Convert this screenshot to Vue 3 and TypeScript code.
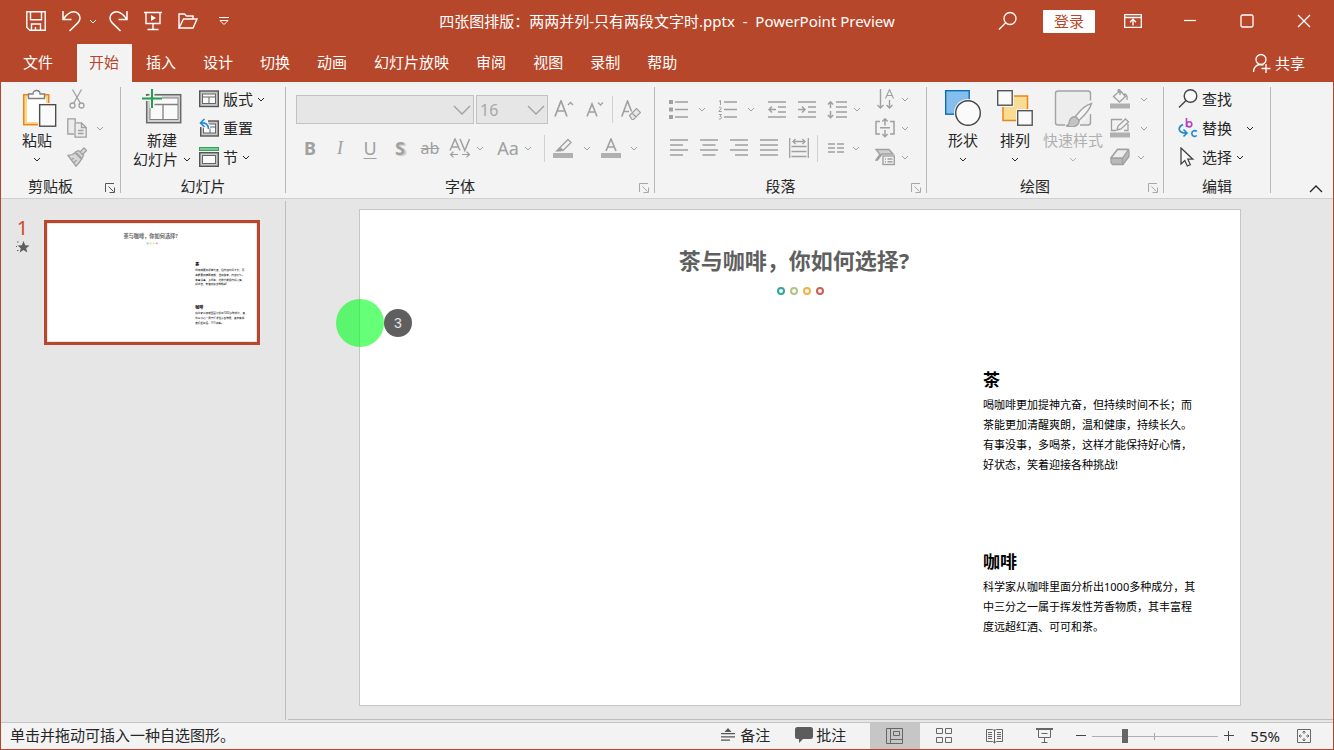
<script setup lang="ts">
import { h, ref } from 'vue'

interface TextBlock {
  title: string
  lines: string[]
}

const Chevron = () =>
  h('svg', { class: 'chev', viewBox: '0 0 8 5', width: 8, height: 5, 'aria-hidden': 'true' }, [
    h('path', { d: 'M1 1l3 3 3-3', fill: 'none', stroke: 'currentColor', 'stroke-width': 1 }),
  ])

const Launcher = () =>
  h('svg', { viewBox: '0 0 10 10', width: 10, height: 10, 'aria-hidden': 'true' }, [
    h('path', {
      d: 'M.5 9V.5H9M3.5 3.5l5 5M9.500 4.500v5h-5',
      fill: 'none',
      stroke: 'currentColor',
      'stroke-width': 1,
    }),
  ])

const tabs: string[] = ['文件', '开始', '插入', '设计', '切换', '动画', '幻灯片放映', '审阅', '视图', '录制', '帮助']
const activeTab = ref('开始')
const zoomLevel = ref(25)

const slideTitle = '茶与咖啡，你如何选择?'
const blocks: TextBlock[] = [
  {
    title: '茶',
    lines: [
      '喝咖啡更加提神亢奋，但持续时间不长；而',
      '茶能更加清醒爽朗，温和健康，持续长久。',
      '有事没事，多喝茶，这样才能保持好心情，',
      '好状态，笑着迎接各种挑战!',
    ],
  },
  {
    title: '咖啡',
    lines: ['科学家从咖啡里面分析出1000多种成分，其', '中三分之一属于挥发性芳香物质，其丰富程', '度远超红酒、可可和茶。'],
  },
]
const blockTops: number[] = [176, 358]
const ringNames: string[] = ['teal', 'green', 'amber', 'red']
</script>

<template>
  <div class="window" lang="zh-CN">
    <header class="titlebar">
      <div class="quick">
        <button class="q-save" aria-label="保存">
          <svg viewBox="0 0 20 20" width="20" height="20" fill="none" stroke="currentColor" stroke-width="1.4">
            <path d="M.8.8h18.400v18.400H3.800l-3-3zM4.500.8v8h11v-8M5.500 19v-6h9v6M9.500 16v3" />
          </svg>
        </button>
        <button class="q-undo" aria-label="撤消">
          <svg viewBox="0 0 20 22" width="20" height="22" fill="none" stroke="currentColor" stroke-width="1.500">
            <path d="M1 1v8.500h8.500M1.300 9C5 4 7.500 1.800 11.500 1.800c3.700 0 6.500 2.700 6.500 6.200 0 2-.8 3.500-2.200 4.900L7.500 21" />
          </svg>
        </button>
        <button class="q-more" aria-label="撤消选项"><Chevron /></button>
        <button class="q-redo" aria-label="重复">
          <svg viewBox="0 0 20 22" width="20" height="22" fill="none" stroke="currentColor" stroke-width="1.500">
            <path d="M19 1v8.500h-8.500M18.700 9C15 4 12.500 1.800 8.500 1.800 4.800 1.800 2 4.500 2 8c0 2 .8 3.500 2.200 4.900L12.500 21" />
          </svg>
        </button>
        <button class="q-show" aria-label="从头开始">
          <svg viewBox="0 0 20 20" width="20" height="20" fill="none" stroke="currentColor" stroke-width="1.400">
            <path d="M1 1.500h18M3 1.500v11h14v-11M10 12.500v6M4.500 18.500h11" />
            <path d="M8 4l5 3-5 3z" fill="currentColor" stroke="none" />
          </svg>
        </button>
        <button class="q-open" aria-label="打开">
          <svg viewBox="0 0 20 18" width="20" height="18" fill="none" stroke="currentColor" stroke-width="1.400">
            <path d="M1 16V2h5.500l2 2H15v3M1 16L5.500 7H19l-4 9z" />
          </svg>
        </button>
        <button class="q-custom" aria-label="自定义快速访问工具栏">
          <svg viewBox="0 0 12 10" width="12" height="10" fill="none" stroke="currentColor" stroke-width="1">
            <path d="M1 1.500h10M2 4.500h8L6 8.500z" />
          </svg>
        </button>
      </div>
      <h1 class="doc-title">四张图排版：两两并列-只有两段文字时.pptx&nbsp; -&nbsp; PowerPoint Preview</h1>
      <div class="win-tools">
        <button class="search" aria-label="搜索">
          <svg viewBox="0 0 20 20" width="20" height="20" fill="none" stroke="currentColor" stroke-width="1.300">
            <circle cx="12" cy="7.500" r="6" />
            <path d="M7.700 11.800L1 18.500" />
          </svg>
        </button>
        <button class="login">登录</button>
        <button class="win-btn" aria-label="功能区显示选项">
          <svg viewBox="0 0 18 14" width="18" height="14" fill="none" stroke="currentColor" stroke-width="1.300">
            <path d="M.7.7h16.600v12.600H.7zM.7 3.500h16.600M9 11.500V5.500M6 8.200l3-3 3 3" />
          </svg>
        </button>
        <button class="win-btn" aria-label="最小化">
          <svg viewBox="0 0 14 14" width="14" height="14" stroke="currentColor" stroke-width="1.200"><path d="M1 6.500h12" /></svg>
        </button>
        <button class="win-btn" aria-label="最大化">
          <svg viewBox="0 0 14 14" width="14" height="14" fill="none" stroke="currentColor" stroke-width="1.300">
            <rect x="1" y="1" width="12" height="12" rx="1.500" />
          </svg>
        </button>
        <button class="win-btn" aria-label="关闭">
          <svg viewBox="0 0 14 14" width="14" height="14" stroke="currentColor" stroke-width="1.300"><path d="M1 1l12 12M13 1L1 13" /></svg>
        </button>
      </div>
    </header>

    <nav class="tabs">
      <button
        v-for="tab in tabs"
        :key="tab"
        class="tab"
        :class="{ active: tab === activeTab, file: tab === '文件' }"
        @click="activeTab = tab"
      >
        {{ tab }}
      </button>
      <button class="share">
        <svg viewBox="0 0 20 20" width="20" height="20" fill="none" stroke="currentColor" stroke-width="1.300">
          <circle cx="9" cy="6.500" r="5" />
          <path d="M1.500 19c0-4.500 3-7.500 7-7.500 1.300 0 2.300.2 3 .6M14 11v9M9.500 15.500h9" />
        </svg>
        共享
      </button>
    </nav>

    <section class="ribbon" aria-label="功能区">
      <div class="group clipboard">
        <div class="content">
          <button class="big">
            <svg viewBox="-2 0 40 38" width="40" height="38">
              <rect x="4.700" y="5.700" width="25" height="30" fill="#fbd98b" stroke="#e8861e" stroke-width="1.500" />
              <rect x="8" y="9" width="19" height="24" fill="#fff" />
              <path d="M9.500 9.500V5h4.500c0-2 1.500-3.500 3.500-3.500S21 3 21 5h4.500v4.500z" fill="#fafafa" stroke="#808080" stroke-width="1.300" />
              <rect x="19" y="14" width="18" height="24" fill="#f3f3f3" />
              <rect x="20.700" y="15.700" width="16" height="21.500" fill="#fafafa" stroke="#444" stroke-width="1.300" />
            </svg>
            <span>粘贴</span>
            <span class="drop"><Chevron /></span>
          </button>
          <div class="rows disabled">
            <button class="tool" aria-label="剪切">
              <svg viewBox="0 0 20 20" width="20" height="20" fill="none" stroke="currentColor" stroke-width="1.300">
                <path d="M5.500.5l8 14M14.500.5l-8 14" />
                <circle cx="5.500" cy="16.500" r="2.500" />
                <circle cx="14.500" cy="16.500" r="2.500" />
              </svg>
            </button>
            <div class="line">
              <button class="tool" aria-label="复制">
                <svg viewBox="0 0 20 20" width="20" height="20" fill="#ececec" stroke="currentColor" stroke-width="1.300">
                  <path d="M7 16H.8V.8h7.400V4" />
                  <path d="M8 4.800h6.500l4.700 4.700v9.700H8zM14.500 4.800v4.700h4.700M11 12.500h5.500M11 15.500h5.500" />
                </svg>
              </button>
              <button class="c-copy" aria-label="复制选项"><Chevron /></button>
            </div>
            <button class="tool" aria-label="格式刷">
              <svg viewBox="0 0 20 20" width="20" height="20" fill="#d8d8d8" stroke="currentColor" stroke-width="1.300">
                <path d="M1 8.500c3.500 0 5-.8 7-2.800l6.500 6.500c-1.500 2.500-3 4.500-5.500 7z" />
                <path d="M4 13l3-2M6.500 16l3-3M8.500 5l3-1.500 5 5-1.500 3zM13 5l4-4 2.500 2.500-4 4z" />
              </svg>
            </button>
          </div>
        </div>
        <footer><span>剪贴板</span><button class="launch" aria-label="剪贴板设置"><Launcher /></button></footer>
      </div>

      <div class="group slides">
        <div class="content">
          <button class="big">
            <svg viewBox="0 0 40 38" width="40" height="38">
              <rect x="4.700" y="5.700" width="34" height="28" fill="#d2d2d2" stroke="#6a6a6a" stroke-width="1.500" />
              <rect x="8" y="9" width="28" height="21.500" fill="#fafafa" stroke="#808080" />
              <path d="M8 15.500h28M21 15.500v15" stroke="#808080" fill="none" stroke-width="1.300" />
              <path d="M10 0v19M0 9.500h20" stroke="#f3f3f3" stroke-width="5" />
              <path d="M10 0v19M0 9.500h20" stroke="#22a04c" stroke-width="2" />
            </svg>
            <span>新建</span>
            <span class="drop">幻灯片<Chevron /></span>
          </button>
          <div class="rows">
            <button class="labelled">
              <svg viewBox="0 0 20 20" width="20" height="20">
                <rect x=".7" y="2" width="18.600" height="15.500" fill="#c8c8c8" stroke="#555" stroke-width="1.400" />
                <rect x="3.500" y="5" width="13" height="9.500" fill="#fafafa" stroke="#666" />
                <path d="M3.500 8h13M10 8v6.500" stroke="#666" />
              </svg>
              版式<Chevron />
            </button>
            <button class="labelled">
              <svg viewBox="0 0 20 20" width="20" height="20">
                <rect x="1.700" y="3" width="17.600" height="15" fill="#c8c8c8" stroke="#555" stroke-width="1.400" />
                <rect x="4.500" y="6" width="12" height="9" fill="#fafafa" stroke="#666" />
                <path d="M8 9h8.500M11 9v6" stroke="#666" />
                <path d="M0 0h9v9H0z" fill="#f3f3f3" />
                <path d="M5.500 1L1.500 5l4 4M2 5c4.500-.5 7.500 1.500 7.500 6" fill="none" stroke="#f3f3f3" stroke-width="4" />
                <path d="M5.500 1L1.500 5l4 4M2 5c4.500-.5 7.500 1.500 7.500 6" fill="none" stroke="#1e88d2" stroke-width="1.600" />
              </svg>
              重置
            </button>
            <button class="labelled">
              <svg viewBox="0 0 20 20" width="20" height="20">
                <rect x=".5" y=".5" width="19" height="3" fill="#7fc795" stroke="#31a354" />
                <rect x=".7" y="5.700" width="18.600" height="13.600" fill="#c8c8c8" stroke="#555" stroke-width="1.400" />
                <rect x="3.500" y="8.500" width="13" height="8" fill="#fafafa" stroke="#666" />
              </svg>
              节<Chevron />
            </button>
          </div>
        </div>
        <footer><span>幻灯片</span></footer>
      </div>

      <div class="group font">
        <div class="stack disabled">
          <div class="line first">
            <label class="combo wide">
              <select aria-label="字体" disabled><option></option></select>
              <svg viewBox="0 0 18 10" width="18" height="10" fill="none" stroke="currentColor" stroke-width="1.300"><path d="M1 1l8 8 8-8" /></svg>
            </label>
            <label class="combo">
              <select aria-label="字号" disabled><option>16</option></select>
              <svg viewBox="0 0 18 10" width="18" height="10" fill="none" stroke="currentColor" stroke-width="1.300"><path d="M1 1l8 8 8-8" /></svg>
            </label>
            <button class="cell" aria-label="增大字号">
              <svg viewBox="0 0 20 20" width="20" height="20" fill="none" stroke="currentColor" stroke-width="1.700">
                <path d="M1 16.500L7 .8l6 15.700M3.200 11h7.600" />
                <path d="M14 5l2.500-2.500L19 5" stroke-width="1.300" />
              </svg>
            </button>
            <button class="cell" aria-label="减小字号">
              <svg viewBox="0 0 20 20" width="20" height="20" fill="none" stroke="currentColor" stroke-width="1.600">
                <path d="M2 16.500L7 4l5 12.500M3.800 12h6.400" />
                <path d="M13 2.500L15.500 5 18 2.500" stroke-width="1.300" />
              </svg>
            </button>
            <i class="sep"></i>
            <button class="cell" aria-label="清除格式">
              <svg viewBox="0 0 20 20" width="20" height="20" fill="none" stroke="currentColor" stroke-width="1.600">
                <path d="M.8 16.500L6.500 1l4 10.500M3 11.500h5" />
                <path d="M8.500 15.500l7-7 4 4-7 7h-1.500zM11 13l4 4" stroke-width="1.200" fill="#e8e8e8" />
              </svg>
            </button>
          </div>
          <div class="line second">
            <button class="cell glyph bold">B</button>
            <button class="cell glyph italic">I</button>
            <button class="cell glyph under">U</button>
            <button class="cell glyph shadow">S</button>
            <button class="cell glyph strike">ab</button>
            <button class="cell" aria-label="字符间距">
              <svg viewBox="0 0 22 20" width="22" height="20" fill="none" stroke="currentColor" stroke-width="1.500">
                <path d="M1 12.500L6 1l5 11.500M3 9h6M11 1l4.800 11.500L20.500 1" />
                <path d="M9 16.500H1.500M4.500 13.800l-3 2.700 3 2.700M13 16.500h7.500M17.500 13.800l3 2.700-3 2.700" stroke-width="1.200" />
              </svg>
            </button>
            <button class="c-near" aria-label="字符间距选项"><Chevron /></button>
            <button class="cell glyph case">Aa</button>
            <button class="c-near" aria-label="大小写选项"><Chevron /></button>
            <i class="sep late"></i>
            <button class="cell" aria-label="突出显示颜色">
              <svg viewBox="0 0 20 20" width="20" height="20" fill="none" stroke="currentColor" stroke-width="1.300">
                <path d="M7 9.500L15 1.500l3 3L10 12.500zM7 9.500l3 3M6.500 10l-2.500 3" />
                <path d="M2 13.500l4.500-4 3 3-1.500 1z" fill="currentColor" stroke="none" />
                <path d="M0 17.500h20" stroke="#b0b0b0" stroke-width="5" />
              </svg>
            </button>
            <button class="c-mid" aria-label="突出显示选项"><Chevron /></button>
            <button class="cell" aria-label="字体颜色">
              <svg viewBox="0 0 20 20" width="20" height="20" fill="none" stroke="currentColor" stroke-width="1.600">
                <path d="M5 13l5-12 5 12M6.700 9h6.600" />
                <path d="M0 17.500h20" stroke="#b0b0b0" stroke-width="5" />
              </svg>
            </button>
            <button class="c-wide" aria-label="字体颜色选项"><Chevron /></button>
          </div>
        </div>
        <footer><span>字体</span><button class="launch pale" aria-label="字体设置"><Launcher /></button></footer>
      </div>

      <div class="group paragraph">
        <div class="content disabled">
          <div class="stack">
            <div class="line first">
              <button class="cell" aria-label="项目符号">
                <svg viewBox="0 0 20 20" width="20" height="20" stroke="currentColor" stroke-width="1.500">
                  <path d="M6 2h13M6 9.500h13M6 17h13" />
                  <path d="M0 2h4M0 9.500h4M0 17h4" stroke-width="4" />
                </svg>
              </button>
              <button class="c-wide" aria-label="项目符号选项"><Chevron /></button>
              <button class="cell push" aria-label="编号">
                <svg viewBox="0 0 20 20" width="20" height="20" fill="none" stroke="currentColor" stroke-width="1.500">
                  <path d="M6 2h13M6 9.500h13M6 17h13" />
                  <path d="M1 1.500L2.500.5V5M.8 8c.5-1.200 3-1 2.400.5L.8 11.500h3M.8 14.500h2.700L2 16.500c2.500 0 2 3-1.200 2.500" stroke-width="1" />
                </svg>
              </button>
              <button class="c-wide" aria-label="编号选项"><Chevron /></button>
              <button class="cell push" aria-label="减少缩进">
                <svg viewBox="0 0 20 20" width="20" height="20" fill="none" stroke="currentColor" stroke-width="1.500">
                  <path d="M1 2h18M11 7h8M11 12h8M1 17h18M9 9.500H2M5 6.500l-3 3 3 3" />
                </svg>
              </button>
              <button class="cell" aria-label="增加缩进">
                <svg viewBox="0 0 20 20" width="20" height="20" fill="none" stroke="currentColor" stroke-width="1.500">
                  <path d="M1 2h18M11 7h8M11 12h8M1 17h18M1 9.500h7M5 6.500l3 3-3 3" />
                </svg>
              </button>
              <button class="cell" aria-label="行距">
                <svg viewBox="0 0 20 20" width="20" height="20" fill="none" stroke="currentColor" stroke-width="1.500">
                  <path d="M9 2h11M9 7h11M9 12h11M9 17h11M3.500 2v6M.8 4.500l2.700-2.700 2.700 2.700M3.500 11v7M.8 15l2.700 2.700L6.200 15" />
                </svg>
              </button>
              <button class="c-near" aria-label="行距选项"><Chevron /></button>
            </div>
            <div class="line second">
              <button class="cell" aria-label="左对齐">
                <svg viewBox="0 0 20 20" width="20" height="20" stroke="currentColor" stroke-width="1.500"><path d="M1 2h18M1 7h13M1 12h18M1 17h13" /></svg>
              </button>
              <button class="cell" aria-label="居中">
                <svg viewBox="0 0 20 20" width="20" height="20" stroke="currentColor" stroke-width="1.500"><path d="M1 2h18M3.500 7h13M1 12h18M3.500 17h13" /></svg>
              </button>
              <button class="cell" aria-label="右对齐">
                <svg viewBox="0 0 20 20" width="20" height="20" stroke="currentColor" stroke-width="1.500"><path d="M1 2h18M6 7h13M1 12h18M6 17h13" /></svg>
              </button>
              <button class="cell" aria-label="两端对齐">
                <svg viewBox="0 0 20 20" width="20" height="20" stroke="currentColor" stroke-width="1.500"><path d="M1 2h18M1 7h18M1 12h18M1 17h18" /></svg>
              </button>
              <button class="cell" aria-label="分散对齐">
                <svg viewBox="0 0 20 20" width="20" height="20" fill="none" stroke="currentColor" stroke-width="1.300">
                  <path d="M.7 0v20M19.300 0v20M2.500 8.500h15M2.500 13.500h15M2.500 18.500h15M4 3.500h12M6.500 1L4 3.500 6.500 6M13.500 1L16 3.500 13.500 6" />
                </svg>
              </button>
              <i class="sep"></i>
              <button class="cell" aria-label="分栏">
                <svg viewBox="0 0 20 20" width="20" height="20" stroke="currentColor" stroke-width="1.300"><path d="M2 6h7M2 10h7M2 14h7M11 6h7M11 10h7M11 14h7" /></svg>
              </button>
              <button class="c-near" aria-label="分栏选项"><Chevron /></button>
            </div>
          </div>
          <div class="rows">
            <div class="line">
              <button class="cell" aria-label="文字方向">
                <svg viewBox="0 0 20 20" width="20" height="20" fill="none" stroke="currentColor" stroke-width="1.400">
                  <path d="M5.500 0v18.500M2.500 16l3 3 3-3M14.500 11v7.500M11.500 16l3 3 3-3" />
                  <path d="M10.500 9.500L14.500.5l4 9M12 6.500h5" stroke-width="1.100" />
                </svg>
              </button>
              <button class="c-near" aria-label="文字方向选项"><Chevron /></button>
            </div>
            <div class="line">
              <button class="cell" aria-label="对齐文本">
                <svg viewBox="0 0 20 20" width="20" height="20" fill="none" stroke="currentColor" stroke-width="1.500">
                  <path d="M5 3.500H1v12.500h4M15 3.500h4v12.500h-4M5 9.800h10M10 7.500V1M7.300 3.500L10 .8l2.700 2.700M10 12v6.500M7.300 16l2.700 2.700 2.700-2.700" />
                </svg>
              </button>
              <button class="c-near" aria-label="对齐文本选项"><Chevron /></button>
            </div>
            <div class="line">
              <button class="cell" aria-label="转换为 SmartArt">
                <svg viewBox="0 0 20 20" width="20" height="20" fill="#cfcfcf" stroke="currentColor" stroke-width="1.400">
                  <path d="M1 2.500h13L18 7H7l-4.500 6H1l4-5.500z" />
                  <rect x="8" y="9" width="11.300" height="8.500" fill="#f3f3f3" />
                  <path d="M10 12h1M12.500 12h5M10 14.700h1M12.500 14.700h5" />
                </svg>
              </button>
              <button class="c-near" aria-label="SmartArt 选项"><Chevron /></button>
            </div>
          </div>
        </div>
        <footer><span>段落</span><button class="launch pale" aria-label="段落设置"><Launcher /></button></footer>
      </div>

      <div class="group drawing">
        <div class="content">
          <button class="big">
            <svg viewBox="0 0 38 38" width="38" height="38">
              <rect x="1.700" y="1.700" width="23.500" height="23.500" fill="#83beec" stroke="#0f6cbd" stroke-width="1.400" />
              <circle cx="24" cy="24" r="14" fill="#f3f3f3" />
              <circle cx="24" cy="24" r="12.300" fill="#fafafa" stroke="#444" stroke-width="1.400" />
            </svg>
            <span>形状</span>
            <span class="drop"><Chevron /></span>
          </button>
          <button class="big">
            <svg viewBox="0 0 38 38" width="38" height="38">
              <rect x="7" y="7" width="24.500" height="24.500" fill="#f8dc91" stroke="#e8861e" stroke-width="1.500" />
              <path d="M0 0h18v18H0zM20 20h18v18H20z" fill="#f3f3f3" />
              <rect x="1.700" y="1.700" width="14.500" height="14.500" fill="#fafafa" stroke="#555" stroke-width="1.400" />
              <rect x="21.700" y="21.700" width="14.500" height="14.500" fill="#fafafa" stroke="#555" stroke-width="1.400" />
            </svg>
            <span>排列</span>
            <span class="drop"><Chevron /></span>
          </button>
          <button class="big faded">
            <svg viewBox="0 0 40 38" width="40" height="38" fill="none" stroke="#a3a3a3" stroke-width="1.400">
              <path d="M12 36H5a2.500 2.500 0 0 1-2.500-2.500v-29A2.500 2.500 0 0 1 5 2h30a2.500 2.500 0 0 1 2.500 2.500v7M37.500 25v8.500A2.500 2.500 0 0 1 35 36h-8" fill="#ededed" />
              <path d="M22.500 27.500C28 20 33 16 38.500 14.500 37 20 32 26 26 31.500z" fill="#f5f5f5" />
              <path d="M13 36.500c3 0 3-2 3.500-4.500.8-3.500 4-5 6.500-4l3 3.500c.5 5-6 8.500-13 5z" fill="#c4c4c4" />
            </svg>
            <span>快速样式</span>
            <span class="drop"><Chevron /></span>
          </button>
          <div class="rows disabled">
            <div class="line">
              <button class="cell" aria-label="形状填充">
                <svg viewBox="0 0 20 20" width="20" height="20" fill="none" stroke="currentColor" stroke-width="1.300">
                  <path d="M3.500 7.500l6.500-6 5.500 6-6 5.500zM8 4V1.500c0-1.200 2-1.200 2 0V6M14 5c2.500 0 3.500 1.500 3 6" />
                  <path d="M0 17h20" stroke="#b0b0b0" stroke-width="5" />
                </svg>
              </button>
              <button class="c-wide" aria-label="形状填充选项"><Chevron /></button>
            </div>
            <div class="line">
              <button class="cell" aria-label="形状轮廓">
                <svg viewBox="0 0 20 20" width="20" height="20" fill="none" stroke="currentColor" stroke-width="1.300">
                  <path d="M12 1.500H1.500v11H6M18 6v6.500h-4M7 12l1-4 7.500-7 3 3L11 11z" />
                  <path d="M0 17h20" stroke="#b0b0b0" stroke-width="5" />
                </svg>
              </button>
              <button class="c-wide" aria-label="形状轮廓选项"><Chevron /></button>
            </div>
            <div class="line">
              <button class="cell" aria-label="形状效果">
                <svg viewBox="0 0 20 20" width="20" height="20" fill="#b8b8b8" stroke="currentColor" stroke-width="1.300">
                  <path d="M1 11L7.500 2.500H17.500L19 4v5.500L13 17.500H2.500L1 15.500z" />
                  <path d="M1 11L7.500 2.500h11L12.500 11z" fill="#ededed" />
                  <path d="M12.500 11v6.500" />
                </svg>
              </button>
              <button class="c-near" aria-label="形状效果选项"><Chevron /></button>
            </div>
          </div>
        </div>
        <footer><span>绘图</span><button class="launch pale" aria-label="绘图设置"><Launcher /></button></footer>
      </div>

      <div class="group editing">
        <div class="content">
          <div class="rows">
            <button class="labelled">
              <svg viewBox="0 0 20 20" width="20" height="20" fill="#fafafa" stroke="#444" stroke-width="1.400">
                <circle cx="12.500" cy="7" r="6.300" />
                <path d="M8 11.500L1 18.500" />
              </svg>
              查找
            </button>
            <button class="labelled far">
              <svg viewBox="0 0 20 20" width="20" height="20" fill="none" stroke-width="1.600">
                <path d="M8.500 0v9" stroke="#b146c2" />
                <circle cx="11.200" cy="6.300" r="2.600" stroke="#b146c2" />
                <path d="M18.800 13.500c-1.500-1.500-5-1-5 2s3.500 3.500 5 2M5 6.500C-.5 9-.5 15 8.500 15M5.500 11.500L9 15l-3.500 3.500" stroke="#1e88d2" />
              </svg>
              替换<Chevron />
            </button>
            <button class="labelled">
              <svg viewBox="0 0 20 20" width="20" height="20" fill="#fafafa" stroke="#444" stroke-width="1.300">
                <path d="M3 1v16l3.800-3.500 2.500 5.500 3-1.400-2.500-5.400h5z" />
              </svg>
              选择<Chevron />
            </button>
          </div>
        </div>
        <footer><span>编辑</span></footer>
      </div>

      <button class="collapse" aria-label="折叠功能区">
        <svg viewBox="0 0 14 8" width="14" height="8" fill="none" stroke="currentColor" stroke-width="1.300"><path d="M1 7l6-6 6 6" /></svg>
      </button>
    </section>

    <main class="workspace">
      <aside class="thumbs">
        <div class="index">
          <span>1</span>
          <svg viewBox="0 0 14 14" width="14" height="14" fill="#5f5f5f">
            <path d="M7.500 1l1.700 4.200 4.300.2-3.300 2.800 1.100 4.300-3.800-2.400-3.800 2.400 1.100-4.300L1.500 5.400l4.300-.2z" />
            <path d="M1 1.500h1.500v1H1zM0 6h1v1H0zM1 10h1.500v1H1z" />
          </svg>
        </div>
        <button class="thumb" aria-label="幻灯片 1">
          <svg viewBox="0 0 880 496" class="mini">
            <text x="319" y="59" class="mini-title">{{ slideTitle }}</text>
            <circle v-for="(name, i) in ringNames" :key="name" :cx="421 + i * 13" cy="82" r="3" fill="none" stroke-width="2" :class="name" />
            <g v-for="(block, b) in blocks" :key="block.title">
              <text x="623" :y="blockTops[b]" class="mini-head">{{ block.title }}</text>
              <text v-for="(line, i) in block.lines" :key="line" x="623" :y="blockTops[b] + 24 + i * 20" class="mini-body">{{ line }}</text>
            </g>
          </svg>
        </button>
      </aside>
      <section class="stage">
        <article class="slide">
          <h2>{{ slideTitle }}</h2>
          <div class="rings">
            <i v-for="name in ringNames" :key="name" :class="name"></i>
          </div>
          <section v-for="block in blocks" :key="block.title" class="block">
            <h3>{{ block.title }}</h3>
            <p>
              <span v-for="line in block.lines" :key="line">{{ line }}</span>
            </p>
          </section>
          <div class="marker">
            <span class="spot"></span>
            <span class="count">3</span>
          </div>
        </article>
      </section>
    </main>

    <footer class="status">
      <span class="hint">单击并拖动可插入一种自选图形。</span>
      <button class="note">
        <svg viewBox="0 0 14 14" width="14" height="14" fill="#555"><path d="M3.500 4L7 0l3.500 4zM0 5h14v1.200H0zM0 8.300h14v1.200H0zM0 11.500h9v1.200H0z" /></svg>
        备注
      </button>
      <button class="comment">
        <svg viewBox="0 0 18 16" width="18" height="16" fill="#5c5c5c">
          <path d="M2.500 0h13A2.500 2.500 0 0 1 18 2.500v7a2.500 2.500 0 0 1-2.500 2.500H8l-4 4v-4H2.500A2.500 2.500 0 0 1 0 9.500v-7A2.500 2.500 0 0 1 2.500 0z" />
        </svg>
        批注
      </button>
      <button class="view on" aria-label="普通视图">
        <svg viewBox="0 0 18 16" width="18" height="16" fill="none" stroke="currentColor"><path d="M.5.5h16v15H.5zM4.500.5v15M4.500 11.500H16.500M7.500 3.500h6v4h-6z" /></svg>
      </button>
      <button class="view" aria-label="幻灯片浏览">
        <svg viewBox="0 0 18 16" width="18" height="16" fill="none" stroke="currentColor"><path d="M.5.5h6v5h-6zM9.500.5h6v5h-6zM.5 9.500h6v5h-6zM9.500 9.500h6v5h-6z" /></svg>
      </button>
      <button class="view" aria-label="阅读视图">
        <svg viewBox="0 0 18 16" width="18" height="16" fill="none" stroke="currentColor">
          <path d="M.5 1.500h6l2 1 2-1h6v12h-6l-2 1-2-1h-6zM8.500 1.500v14M2 4.500h4M2 6.500h4M2 8.500h4M2 10.500h4M11 4.500h4M11 6.500h4M11 8.500h4M11 10.500h4" />
        </svg>
      </button>
      <button class="view" aria-label="幻灯片放映">
        <svg viewBox="0 0 18 16" width="18" height="16" fill="none" stroke="currentColor">
          <path d="M0 1h17" stroke-width="2" />
          <path d="M2.500 1.500v8h12v-8M5.500 5.500h6M8.500 9.500v5M5.500 14.500h6" />
        </svg>
      </button>
      <button class="step" aria-label="缩小">
        <svg viewBox="0 0 10 10" width="10" height="10" stroke="#444"><path d="M0 4.500h10" /></svg>
      </button>
      <input v-model.number="zoomLevel" class="zoom" type="range" min="0" max="100" aria-label="显示比例" />
      <button class="step" aria-label="放大">
        <svg viewBox="0 0 10 10" width="10" height="10" stroke="#444"><path d="M0 4.500h10M4.500 0v10" /></svg>
      </button>
      <button class="percent">55%</button>
      <button class="fit" aria-label="适应窗口">
        <svg viewBox="0 0 14 14" width="14" height="14" fill="none" stroke="#666">
          <path d="M.5.500h13v13H.5zM7 2v3M7 9v3M2 7h3M9 7h3M5.500 3.500L7 2l1.500 1.500M5.500 10.500L7 12l1.500-1.500M3.500 5.500L2 7l1.500 1.500M10.500 5.500L12 7l-1.500 1.500" />
        </svg>
      </button>
    </footer>
  </div>
</template>

<style>
body {
  margin: 0;
}
</style>

<style scoped>
.window {
  display: flex;
  flex-direction: column;
  box-sizing: border-box;
  height: 100vh;
  border: 1px solid #b7472a;
  border-top: 0;
  background: #f3f3f3;
  color: #262626;
  font: 15px/18px 'Noto Sans', 'Noto Sans CJK SC', sans-serif;
  overflow: hidden;
}
button {
  display: inline-flex;
  align-items: center;
  justify-content: center;
  flex: none;
  margin: 0;
  padding: 0;
  border: 0;
  background: none;
  color: inherit;
  font: inherit;
  white-space: nowrap;
}
svg {
  display: block;
  flex: none;
}

.titlebar {
  display: grid;
  grid-template-columns: 1fr auto 1fr;
  align-items: center;
  height: 42px;
  padding-bottom: 2px;
  flex: none;
  background: #b7472a;
  color: #fff;
}
.quick {
  display: flex;
  align-items: center;
  padding-left: 25px;
}
.q-undo {
  margin-left: 16px;
}
.q-more {
  margin-left: 7px;
}
.q-redo {
  margin-left: 11px;
}
.q-show {
  margin-left: 15px;
}
.q-open {
  margin-left: 15px;
}
.q-custom {
  margin-left: 20px;
}
.doc-title {
  margin: 0;
  font: inherit;
  white-space: nowrap;
}
.win-tools {
  display: flex;
  align-items: center;
  justify-content: flex-end;
  padding-right: 1px;
}
.search {
  width: 30px;
}
.login {
  width: 52px;
  height: 23px;
  margin: 0 9px 0 20px;
  border-radius: 1px;
  background: #fff;
  color: #b7472a;
}
.win-btn {
  width: 57px;
  height: 40px;
}

.tabs {
  display: flex;
  gap: 2px;
  flex: none;
  height: 38px;
  padding: 0 28px 0 10px;
  background: #b7472a;
  color: #fff;
}
.tab {
  padding: 0 13px 2px 12px;
}
.tab.file {
  margin-right: 9px;
}
.tab.active {
  background: #f3f3f3;
  color: #b7472a;
}
.share {
  gap: 3px;
  margin-left: auto;
}

.ribbon {
  display: flex;
  flex: none;
  height: 106px;
  padding: 5px 0;
  border-bottom: 1px solid #d0d0d0;
}
.group {
  display: flex;
  flex-direction: column;
  flex: none;
  border-right: 1px solid #b8b8b8;
}
.content,
.line {
  display: flex;
}
.line {
  align-items: center;
}
.group footer {
  display: flex;
  align-items: center;
  height: 14px;
  margin-top: auto;
}
.group footer span {
  flex: 1;
  text-align: center;
}
.launch {
  width: 20px;
  padding-top: 4px;
  color: #555;
}
.launch.pale {
  color: #a8a8a8;
}
.disabled {
  color: #a0a0a0;
}
.rows {
  display: grid;
  grid-template-rows: repeat(3, 24px);
  row-gap: 5px;
  justify-items: start;
}
.big {
  display: flex;
  flex-direction: column;
  justify-content: flex-start;
  padding-top: 2px;
}
.big > svg {
  margin-bottom: 4px;
}
.big .drop {
  display: flex;
  align-items: center;
  gap: 5px;
  height: 18px;
  margin-top: 1px;
}
.tool {
  width: 20px;
}
.c-copy {
  margin-left: 9px;
}
.labelled {
  gap: 4px;
}
.far .chev {
  margin-left: 10px;
}
.cell {
  width: 30px;
  height: 24px;
}
.c-near {
  width: 10px;
}
.c-mid {
  width: 18px;
}
.c-wide {
  width: 16px;
}
.sep {
  width: 1px;
  height: 27px;
  flex: none;
  margin: 0 2px 0 1px;
  background: #d0d0d0;
}
.sep.late {
  margin: 0 3px 0 11px;
}
.stack {
  display: flex;
  flex-direction: column;
  gap: 12px;
  padding-top: 8px;
}
.first {
  height: 29px;
}
.second {
  height: 24px;
}

.clipboard .content {
  padding: 0 16px;
  gap: 10px;
}
.slides .content {
  gap: 4px;
  padding: 0 20px 0 8px;
}
.slides .content .big {
  width: 66px;
}
.font .stack {
  padding-left: 9px;
  padding-right: 8px;
}
.font .first {
  gap: 1px;
  padding-left: 1px;
}
.combo {
  position: relative;
  width: 72px;
  height: 29px;
}
.combo.wide {
  width: 178px;
  margin-right: 1px;
}
.combo select {
  appearance: none;
  box-sizing: border-box;
  width: 100%;
  height: 100%;
  margin: 0;
  padding: 0 0 0 3px;
  border: 1px solid #c2c2c2;
  border-radius: 0;
  background: #e6e6e6;
  color: #a8a8a8;
  font: inherit;
  font-size: 16px;
  opacity: 1;
}
.combo svg {
  position: absolute;
  top: 10px;
  right: 3px;
}
.glyph {
  font-size: 18px;
  line-height: 24px;
}
.bold {
  font-weight: 700;
}
.italic {
  font-family: 'Liberation Serif', serif;
  font-style: italic;
}
.under {
  text-decoration: underline;
  text-underline-offset: 3px;
}
.shadow {
  font-weight: 700;
  text-shadow: 2px 1px 1px #c8c8c8;
}
.strike {
  font-size: 16px;
  text-decoration: line-through;
}
.case {
  margin-left: 8px;
}
.paragraph .content {
  gap: 8px;
  padding: 0 16px 0 9px;
}
.paragraph .push {
  margin-left: 3px;
}
.paragraph .sep {
  margin: 0 3px;
}
.drawing .content {
  padding: 0 11px 0 10px;
}
.drawing .big {
  width: 52px;
}
.drawing .big.faded {
  width: 64px;
  color: #b0b0b0;
}
.drawing .cell {
  margin-right: 1px;
}
.editing .content {
  padding: 0 16px 0 14px;
}
.collapse {
  align-self: flex-end;
  margin: 0 10px 0 auto;
}

.workspace {
  display: flex;
  flex: 1;
  min-height: 0;
  background: #e6e6e6;
}
.thumbs {
  display: flex;
  align-items: flex-start;
  flex: none;
  gap: 14px;
  margin: 2px 0;
  padding: 19px 25px 0 14px;
  border-right: 1px solid #bdbdbd;
}
.index {
  display: flex;
  flex-direction: column;
  align-items: center;
  gap: 4px;
  width: 15px;
  color: #d24726;
  font-size: 20px;
  line-height: 16px;
}
.thumb {
  width: 216px;
  padding: 1px;
  box-sizing: border-box;
  border: 3px solid #b7472a;
}
.mini {
  width: 100%;
  background: #fff;
}
.mini-title {
  fill: #5f5f5f;
  font-size: 22px;
  font-weight: 700;
}
.mini-head {
  fill: #000;
  font-size: 17px;
  font-weight: 700;
}
.mini-body {
  fill: #000;
  font-size: 11px;
}
.teal {
  border-color: #2fa79b;
  stroke: #2fa79b;
}
.green {
  border-color: #adc681;
  stroke: #adc681;
}
.amber {
  border-color: #f2b045;
  stroke: #f2b045;
}
.red {
  border-color: #cb5f54;
  stroke: #cb5f54;
}
.stage {
  display: flex;
  flex: 1;
  min-width: 0;
  margin: 0 0 2px 2px;
  padding: 10px 92px 13px 71px;
  border-bottom: 1px solid #bdbdbd;
}
.slide {
  position: relative;
  flex: 1;
  min-width: 0;
  padding-top: 35px;
  border: 1px solid #c6c6c6;
  background: #fff;
}
.slide h2 {
  margin: 0 12px 0 0;
  color: #5f5f5f;
  font-size: 22px;
  line-height: 30px;
  text-align: center;
}
.rings {
  display: flex;
  justify-content: center;
  gap: 5px;
  margin-top: 12px;
}
.rings i {
  width: 4px;
  height: 4px;
  border-width: 2px;
  border-style: solid;
  border-radius: 50%;
}
.block {
  width: 257px;
  margin: 73px 0 0 auto;
  color: #000;
  white-space: nowrap;
}
.block + .block {
  margin-top: 75px;
}
.block h3 {
  margin: 0 0 3px;
  font-size: 17px;
  line-height: 24px;
}
.block p {
  margin: 0;
  font-size: 11px;
  line-height: 20px;
}
.block p span {
  display: block;
}
.marker {
  position: absolute;
  top: 89px;
  left: -24px;
  display: flex;
  align-items: center;
}
.spot {
  width: 48px;
  height: 48px;
  border-radius: 50%;
  background: rgba(0, 255, 30, 0.6);
}
.count {
  width: 28px;
  border-radius: 50%;
  background: #5f5f5f;
  color: #e6e6e6;
  font: 14px/28px 'Liberation Sans', sans-serif;
  text-align: center;
}

.status {
  display: flex;
  align-items: center;
  flex: none;
  height: 26px;
  border-top: 1px solid #c6c6c6;
}
.hint {
  flex: 1;
  padding: 0 0 2px 9px;
  white-space: nowrap;
}
.note {
  gap: 5px;
  padding-bottom: 2px;
}
.comment {
  gap: 3px;
  margin: 0 24px 0 25px;
  padding-bottom: 2px;
}
.view {
  width: 50px;
  height: 26px;
  color: #666;
}
.view.on {
  background: #c6c6c6;
}
.step {
  margin: 0 6px;
}
.zoom {
  appearance: none;
  width: 126px;
  height: 14px;
  margin: 0;
  background:
    linear-gradient(#a8a8a8, #a8a8a8) 62px 4px / 1px 7px no-repeat,
    linear-gradient(#b0b0b0, #b0b0b0) 0 7px / 100% 1px no-repeat;
}
.zoom::-webkit-slider-thumb {
  appearance: none;
  width: 6px;
  height: 14px;
  background: #666;
}
.percent {
  margin: 0 17px 0 10px;
}
.fit {
  margin-right: 22px;
}
</style>
